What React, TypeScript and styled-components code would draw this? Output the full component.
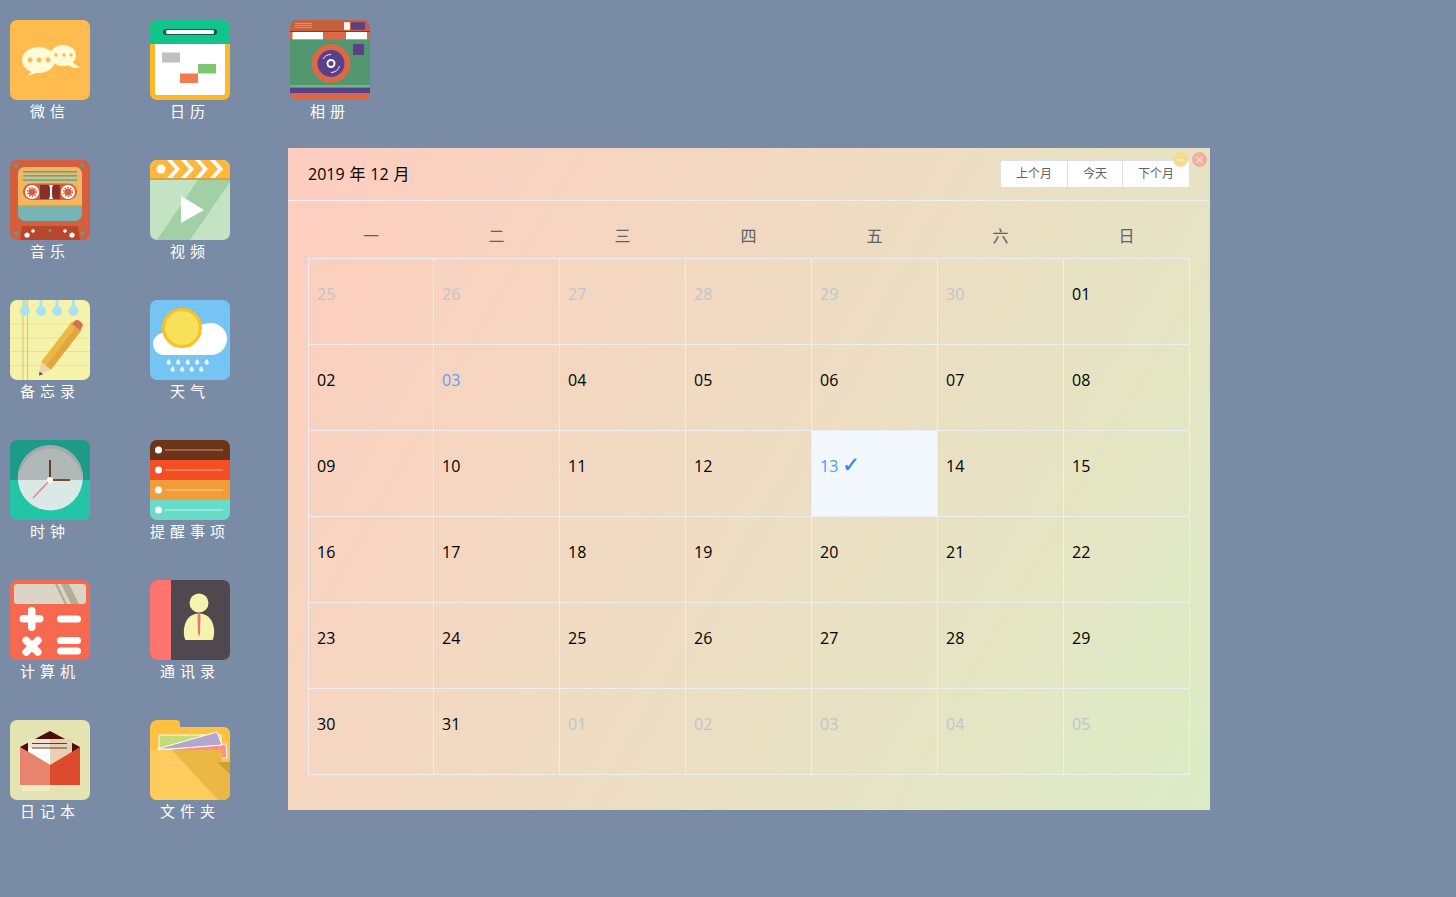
import React from "react";
import styled, { createGlobalStyle } from "styled-components";

const GlobalStyle = createGlobalStyle`
  html, body {
    margin: 0;
    padding: 0;
    height: 100%;
    overflow: hidden;
  }
  body {
    background: #7a8ba5;
    font-family: "Open Sans", "Noto Sans CJK SC", sans-serif;
  }
`;

const WeChatIcon = () => (
  <svg viewBox="0 0 80 80" width="80" height="80">
    <rect width="80" height="80" fill="#ffbb4d" />
    <path d="M17 56 L24 50 L36 50 Z" fill="#fffbd6" />
    <path d="M56 44 L64 48 L70 47.5 L62 42 Z" fill="#fffbd6" />
    <ellipse cx="53" cy="35.5" rx="13" ry="10.5" fill="#fffbd6" />
    <ellipse cx="28.5" cy="40" rx="16.5" ry="13" fill="#fffbd6" />
    <g fill="#ffbb4d">
      <circle cx="20" cy="40" r="2.4" />
      <circle cx="29" cy="40" r="2.4" />
      <circle cx="38" cy="40" r="2.4" />
      <circle cx="46" cy="35" r="1.7" />
      <circle cx="54" cy="35" r="1.7" />
      <circle cx="61" cy="35" r="1.7" />
    </g>
  </svg>
);

const CalendarIcon = () => (
  <svg viewBox="0 0 80 80" width="80" height="80">
    <rect width="80" height="80" fill="#fdb924" />
    <rect x="5" y="20" width="70" height="55" rx="2" fill="#fff" />
    <rect width="80" height="24" fill="#10c48c" />
    <rect x="13" y="9" width="54" height="6" rx="3" fill="#0f5a4a" />
    <rect x="16" y="10" width="48" height="4" rx="1.5" fill="#fff" />
    <rect x="12" y="32.5" width="18" height="10" fill="#c2bfc0" />
    <rect x="48" y="44" width="18" height="9.5" fill="#7dc771" />
    <rect x="30" y="53.5" width="18" height="9.5" fill="#f27b54" />
  </svg>
);

const CameraIcon = () => (
  <svg viewBox="0 0 80 80" width="80" height="80">
    <rect width="80" height="80" fill="#519770" />
    <rect width="80" height="11" fill="#c7603f" />
    <rect y="11" width="80" height="8.5" fill="#dd6845" />
    <rect y="11" width="80" height="1" fill="#5b3f89" />
    <rect x="2.5" y="12" width="30.5" height="7.3" fill="#fff" />
    <rect x="56" y="12" width="21" height="7.3" fill="#fff" />
    <g fill="#da8d70">
      <rect x="5" y="3" width="17" height="1" />
      <rect x="5" y="5" width="17" height="1" />
      <rect x="5" y="7" width="17" height="1" />
    </g>
    <rect x="54" y="2.3" width="6" height="7.5" fill="#fff" />
    <rect x="61" y="2.3" width="14" height="7.5" fill="#5b3f89" />
    <rect x="63" y="24" width="11" height="11" fill="#5b3f89" />
    <circle cx="41" cy="43.5" r="19.5" fill="#dd6845" />
    <circle cx="41" cy="43.5" r="13.5" fill="#5b3f89" />
    <path d="M33 39 A9 9 0 0 1 41 34.5 M49.5 46 A9 9 0 0 1 41 52.5" fill="none" stroke="#f2ecf8" strokeWidth="1" />
    <circle cx="41" cy="43.5" r="3.5" fill="#5b3f89" stroke="#fff" strokeWidth="2" />
    <rect y="65" width="80" height="2.7" fill="#70b48a" />
    <rect y="67.7" width="80" height="5.3" fill="#5b3f89" />
    <rect y="73" width="80" height="7" fill="#dd6845" />
  </svg>
);

const CassetteIcon = () => (
  <svg viewBox="0 0 80 80" width="80" height="80">
    <rect width="80" height="80" fill="#d35f3f" />
    <rect x="8" y="7" width="64" height="54" rx="7" fill="#79b4b5" />
    <path d="M8 47 V14 A7 7 0 0 1 15 7 H65 A7 7 0 0 1 72 14 V47 Z" fill="#f6b55f" />
    <g fill="#39b5b5">
      <rect x="13" y="11" width="54" height="1.6" />
      <rect x="13" y="15" width="54" height="1.6" />
      <rect x="13" y="19.3" width="54" height="1.6" />
      <rect x="8" y="45.5" width="64" height="1" />
    </g>
    <rect x="13" y="23.5" width="54" height="16.5" rx="8.25" fill="#d35f3f" />
    <circle cx="22" cy="32" r="7" fill="#fff" />
    <circle cx="58" cy="32" r="7" fill="#fff" />
    <circle cx="22" cy="32" r="3.6" fill="#d35f3f" />
    <circle cx="58" cy="32" r="3.6" fill="#d35f3f" />
    <circle cx="22" cy="32" r="4.4" fill="none" stroke="#d35f3f" strokeDasharray="1.4 1.4" strokeWidth="1.6" />
    <circle cx="58" cy="32" r="4.4" fill="none" stroke="#d35f3f" strokeDasharray="1.4 1.4" strokeWidth="1.6" />
    <rect x="30" y="25" width="20" height="14" fill="#85302a" />
    <path d="M39 25 H43 L42 28 V36 L43 39 H39 L40 36 V28 Z" fill="#fff" />
    <path d="M12 66 H68 L70 80 H10 Z" fill="#b9462a" />
    <g fill="#fff">
      <circle cx="17" cy="75" r="2.6" />
      <circle cx="23" cy="71" r="1.8" />
      <circle cx="55" cy="71" r="1.8" />
      <circle cx="62" cy="75" r="2.6" />
    </g>
    <g fill="#2fb3b3">
      <circle cx="40" cy="70.5" r="1.6" />
      <circle cx="6" cy="6" r="1.8" />
      <circle cx="72.5" cy="5.5" r="1.8" />
      <circle cx="6" cy="73" r="1.8" />
      <circle cx="72.5" cy="73.5" r="1.8" />
    </g>
  </svg>
);

const VideoIcon = () => (
  <svg viewBox="0 0 80 80" width="80" height="80">
    <rect width="80" height="80" fill="#c3e3c3" />
    <path d="M48 20 H80 V22 L40 80 H7 Z" fill="#a3cfa6" />
    <rect width="80" height="18" fill="#ffb73c" />
    <rect y="18" width="80" height="2" fill="#dca23d" />
    <circle cx="11" cy="9" r="4.5" fill="#fff" />
    <g fill="#fff">
      <path d="M17 0 H22 L30 9 L22 18 H17 L25 9 Z" />
      <path d="M31 0 H36 L44 9 L36 18 H31 L39 9 Z" />
      <path d="M45 0 H50 L58 9 L50 18 H45 L53 9 Z" />
      <path d="M60 0 H65 L73 9 L65 18 H60 L68 9 Z" />
    </g>
    <path d="M31 36 L54 50 L31 63 Z" fill="#fff" />
  </svg>
);

const NotesIcon = () => (
  <svg viewBox="0 0 80 80" width="80" height="80">
    <rect width="80" height="80" fill="#f5f2a9" />
    <g fill="#f1dd99">
      <rect y="23.5" width="80" height="1" />
      <rect y="37.5" width="80" height="1" />
      <rect y="51" width="80" height="1" />
      <rect y="65" width="80" height="1" />
    </g>
    <rect x="12.5" width="1" height="80" fill="#e2c07c" />
    <rect x="17" width="1" height="80" fill="#e2c07c" />
    <g fill="#a8e3ee">
      <rect x="13.5" width="3" height="11" />
      <rect x="29.5" width="3" height="11" />
      <rect x="45.5" width="3" height="11" />
      <rect x="62" width="3" height="11" />
      <circle cx="15" cy="11" r="5" />
      <circle cx="31" cy="11" r="5" />
      <circle cx="47" cy="11" r="5" />
      <circle cx="63.5" cy="11" r="5" />
    </g>
    <path d="M29 75.5 L31 62 L41 69.5 Z" fill="#f2d4a4" />
    <path d="M29 75.5 L29.6 71.5 L33 74.5 Z" fill="#555" />
    <path d="M31 62 L62 21.5 L72 29.5 L41 69.5 Z" fill="#e9b944" />
    <path d="M36 65.8 L67 25.5 L72 29.5 L41 69.5 Z" fill="#e2a542" />
    <path d="M62 24 L65 20.5 Q67 19.5 69 20.5 L72 23 Q73.5 25 72.5 26.5 L70 30 Z" fill="#cf7255" />
  </svg>
);

const WeatherIcon = () => (
  <svg viewBox="0 0 80 80" width="80" height="80">
    <rect width="80" height="80" fill="#76c4f4" />
    <path d="M14 55 A11 11 0 0 1 14 33 H40 C45 27 52 23 61 23 A16 16 0 0 1 61 55 Z" fill="#fff" />
    <circle cx="32" cy="28" r="18.5" fill="#f9e05a" stroke="#fcc11f" strokeWidth="3" />
    <g fill="#e4f3fb">
      <path d="M19 59 Q21.5 62 20.5 64 A2.3 2.3 0 0 1 16.5 62 Q17.5 60 19 59 Z" />
      <path d="M28.5 59 Q31 62 30 64 A2.3 2.3 0 0 1 26 62 Q27 60 28.5 59 Z" />
      <path d="M38 59 Q40.5 62 39.5 64 A2.3 2.3 0 0 1 35.5 62 Q36.5 60 38 59 Z" />
      <path d="M47.5 59 Q50 62 49 64 A2.3 2.3 0 0 1 45 62 Q46 60 47.5 59 Z" />
      <path d="M57 59 Q59.5 62 58.5 64 A2.3 2.3 0 0 1 54.5 62 Q55.5 60 57 59 Z" />
      <path d="M23 66 Q25.5 69 24.5 71 A2.3 2.3 0 0 1 20.5 69 Q21.5 67 23 66 Z" />
      <path d="M32.5 66 Q35 69 34 71 A2.3 2.3 0 0 1 30 69 Q31 67 32.5 66 Z" />
      <path d="M42 66 Q44.5 69 43.5 71 A2.3 2.3 0 0 1 39.5 69 Q40.5 67 42 66 Z" />
      <path d="M51.5 66 Q54 69 53 71 A2.3 2.3 0 0 1 49 69 Q50 67 51.5 66 Z" />
    </g>
  </svg>
);

const ClockIcon = () => (
  <svg viewBox="0 0 80 80" width="80" height="80">
    <rect width="80" height="40" fill="#1c9c87" />
    <rect y="40" width="80" height="40" fill="#22c6a7" />
    <circle cx="40.3" cy="38" r="32.5" fill="#dbe9e6" />
    <path d="M7.9 40 A32.5 32.5 0 1 1 72.7 40 Z" fill="#a5a8a8" />
    <path d="M7.9 40 C9 26 22 8.5 40.3 8.5 C58.6 8.5 71.6 26 72.7 40 Z" fill="#b0b9b8" />
    <rect x="39" y="20" width="2" height="20" fill="#6d3a1f" />
    <rect x="40" y="39" width="20" height="2" fill="#7a4a2c" />
    <path d="M40 40 L23 58" stroke="#f27e9a" strokeWidth="1.6" />
    <circle cx="40" cy="40" r="3" fill="#fff" />
  </svg>
);

const RemindersIcon = () => (
  <svg viewBox="0 0 80 80" width="80" height="80">
    <rect width="80" height="20" fill="#6d3419" />
    <rect y="20" width="80" height="20" fill="#f44f24" />
    <rect y="40" width="80" height="20" fill="#f29d39" />
    <rect y="60" width="80" height="20" fill="#68dcc9" />
    <g fill="#fff">
      <circle cx="8.5" cy="10" r="3.5" />
      <circle cx="8.5" cy="30" r="3.5" />
      <circle cx="8.5" cy="50" r="3.5" />
      <circle cx="8.5" cy="70" r="3.5" />
    </g>
    <rect x="15" y="9" width="58" height="2" fill="#99664d" />
    <rect x="15" y="29" width="58" height="2" fill="#fb7a57" />
    <rect x="15" y="49" width="58" height="2" fill="#f7b86a" />
    <rect x="15" y="69" width="58" height="2" fill="#91ebdb" />
  </svg>
);

const CalculatorIcon = () => (
  <svg viewBox="0 0 80 80" width="80" height="80">
    <rect width="80" height="80" fill="#f6694e" />
    <rect x="4" y="4" width="72" height="20" rx="3" fill="#dcd5c5" />
    <path d="M45 4 H47.5 L57 24 H54.5 Z M51 4 H59 L69 24 H61 Z" fill="#b2ad96" />
    <g fill="#fff">
      <rect x="9.5" y="35" width="24" height="7.5" rx="3.7" />
      <rect x="18" y="27" width="7.5" height="24" rx="3.7" />
      <rect x="47" y="35.5" width="24" height="7" rx="3.5" />
      <rect x="47" y="57" width="24" height="7" rx="3.5" />
      <rect x="47" y="67.5" width="24" height="7" rx="3.5" />
      <rect x="10" y="62.5" width="24" height="7.5" rx="3.7" transform="rotate(45 22 66.2)" />
      <rect x="10" y="62.5" width="24" height="7.5" rx="3.7" transform="rotate(-45 22 66.2)" />
    </g>
  </svg>
);

const ContactsIcon = () => (
  <svg viewBox="0 0 80 80" width="80" height="80">
    <rect width="80" height="80" fill="#50484f" />
    <rect width="21" height="80" fill="#ff7371" />
    <circle cx="49" cy="23" r="9.5" fill="#f5f3ad" />
    <path d="M35.5 60 C32 54 33 33.5 49 33.5 C65 33.5 66 54 62.5 60 Z" fill="#f5f3ad" />
    <path d="M48 33.5 H50 L50.5 36 L50 53 L49 57 L48 53 L47.5 36 Z" fill="#f27070" />
  </svg>
);

const DiaryIcon = () => (
  <svg viewBox="0 0 80 80" width="80" height="80">
    <rect width="80" height="80" fill="#e4e4b2" />
    <path d="M10 27 L40 11 L70 27 V32 H10 Z" fill="#4a0e08" />
    <rect x="18" y="19" width="44" height="26" fill="#e8d0b5" />
    <path d="M18 19 H40 V45 H18 Z" fill="#f0e3d0" />
    <path d="M18 28 H40 V45 L18 34 Z" fill="#fff" />
    <rect x="22" y="23" width="35" height="1" fill="#6a3a2e" />
    <rect x="22" y="27.5" width="35" height="1" fill="#6a3a2e" />
    <path d="M10 27 L40 45 L70 27 V65 H10 Z" fill="#de4a2d" />
    <path d="M10 27 L40 45 V65 H10 Z" fill="#e8836e" />
    <rect x="12" y="65" width="28" height="6" fill="#f0ecc0" />
  </svg>
);

const FolderIcon = () => (
  <svg viewBox="0 0 80 80" width="80" height="80">
    <path d="M0 7 A7 7 0 0 1 7 0 H26 A4 4 0 0 1 30 4 V7 H74 A6 6 0 0 1 80 13 V80 H0 Z" fill="#ffc13f" />
    <path d="M9 15 L71 15 L71 30 L9 30 Z" fill="#c4dd74" stroke="#fff" strokeWidth="1" />
    <path d="M20 29 L76 24 L77 38 L30 38 Z" fill="#ff8f8a" stroke="#fff" strokeWidth="1" />
    <path d="M7 29 L67 12 L72 25 L20 29 Z" fill="#b4a6cb" stroke="#fff" strokeWidth="1" />
    <path d="M0 30 H62 L72 34 V42 H80 V80 H0 Z" fill="#fecb5d" />
    <path d="M22 30 H71 L72 42 H80 V80 H68 Z" fill="#ecb845" />
    <path d="M67 42 H80 V54 Z" fill="#d19f2d" />
    <rect x="11" y="42" width="22" height="0.6" fill="#ffd9a0" />
  </svg>
);

interface IApp {
  name: string;
  icon: React.ReactNode;
}

const apps: IApp[] = [
  { name: "微信", icon: <WeChatIcon /> },
  { name: "音乐", icon: <CassetteIcon /> },
  { name: "备忘录", icon: <NotesIcon /> },
  { name: "时钟", icon: <ClockIcon /> },
  { name: "计算机", icon: <CalculatorIcon /> },
  { name: "日记本", icon: <DiaryIcon /> },
  { name: "日历", icon: <CalendarIcon /> },
  { name: "视频", icon: <VideoIcon /> },
  { name: "天气", icon: <WeatherIcon /> },
  { name: "提醒事项", icon: <RemindersIcon /> },
  { name: "通讯录", icon: <ContactsIcon /> },
  { name: "文件夹", icon: <FolderIcon /> },
  { name: "相册", icon: <CameraIcon /> },
];

const weekDays = ["一", "二", "三", "四", "五", "六", "日"];

type DayKind = "muted" | "normal" | "hover" | "today";

interface IDay {
  label: string;
  kind: DayKind;
}

const pad = (n: number) => (n < 10 ? `0${n}` : `${n}`);

const buildDays = (): IDay[] => {
  const days: IDay[] = [];
  for (let d = 25; d <= 30; d++) days.push({ label: pad(d), kind: "muted" });
  for (let d = 1; d <= 31; d++) {
    const kind: DayKind = d === 3 ? "hover" : d === 13 ? "today" : "normal";
    days.push({ label: pad(d), kind });
  }
  for (let d = 1; d <= 5; d++) days.push({ label: pad(d), kind: "muted" });
  return days;
};

const weeks: IDay[][] = [];
const allDays = buildDays();
for (let i = 0; i < allDays.length; i += 7) weeks.push(allDays.slice(i, i + 7));

const dayColor: Record<DayKind, string> = {
  muted: "#c0c4cc",
  normal: "#000",
  hover: "#5f9cf0",
  today: "#409eff",
};

const App = () => {
  return (
    <>
      <GlobalStyle />
      <Desktop>
        <AppGrid>
          {apps.map((app) => (
            <AppItem key={app.name}>
              <AppIcon>{app.icon}</AppIcon>
              <AppName>{app.name}</AppName>
            </AppItem>
          ))}
        </AppGrid>
        <CalendarWindow>
          <WindowDot $color="#f5da90" $right={22}>
            <MinusMark />
          </WindowDot>
          <WindowDot $color="#efb0a2" $right={3}>
            <CloseMark>×</CloseMark>
          </WindowDot>
          <CalendarHeader>
            <CalendarTitle>2019 年 12 月</CalendarTitle>
            <ButtonGroup>
              <GroupButton>上个月</GroupButton>
              <GroupButton>今天</GroupButton>
              <GroupButton>下个月</GroupButton>
            </ButtonGroup>
          </CalendarHeader>
          <CalendarBody>
            <CalendarTable>
              <thead>
                <tr>
                  {weekDays.map((w) => (
                    <WeekHead key={w}>{w}</WeekHead>
                  ))}
                </tr>
              </thead>
              <tbody>
                {weeks.map((week, i) => (
                  <tr key={i}>
                    {week.map((day, j) => (
                      <DayCell key={j} $kind={day.kind}>
                        <DayLabel>
                          {day.label}
                          {day.kind === "today" && <CheckMark>✓</CheckMark>}
                        </DayLabel>
                      </DayCell>
                    ))}
                  </tr>
                ))}
              </tbody>
            </CalendarTable>
          </CalendarBody>
        </CalendarWindow>
      </Desktop>
    </>
  );
};

export default App;

const Desktop = styled.div`
  position: relative;
  width: 1456px;
  height: 897px;
  overflow: hidden;
`;

const AppGrid = styled.div`
  display: grid;
  grid-auto-flow: column;
  grid-template-rows: repeat(6, 140px);
  grid-auto-columns: 140px;
  padding: 20px 0 0 10px;
`;

const AppItem = styled.div`
  display: flex;
  flex-direction: column;
  width: 80px;
`;

const AppIcon = styled.div`
  width: 80px;
  height: 80px;
  border-radius: 7px;
  overflow: hidden;

  svg {
    display: block;
  }
`;

const AppName = styled.div`
  color: #fff;
  font-size: 15px;
  line-height: 22px;
  letter-spacing: 5px;
  text-align: center;
  white-space: nowrap;
`;

const CalendarWindow = styled.div`
  position: absolute;
  left: 288px;
  top: 148px;
  width: 922px;
  height: 662px;
  background: linear-gradient(120deg, #ffcdbf, #dcecc5);
`;

const WindowDot = styled.span<{ $color: string; $right: number }>`
  position: absolute;
  top: 4px;
  right: ${(p) => p.$right}px;
  z-index: 2;
  width: 15px;
  height: 15px;
  border-radius: 50%;
  background: ${(p) => p.$color};
  display: flex;
  align-items: center;
  justify-content: center;
`;

const MinusMark = styled.span`
  width: 8px;
  height: 2px;
  background: #fdeab8;
`;

const CloseMark = styled.span`
  color: #fde3dc;
  font-size: 15px;
  line-height: 15px;
`;

const CalendarHeader = styled.div`
  display: flex;
  justify-content: space-between;
  align-items: center;
  padding: 12px 20px;
  border-bottom: 1px solid #ebeef5;
`;

const CalendarTitle = styled.div`
  color: #000;
  font-size: 16px;
  word-spacing: 0.7px;
  padding-bottom: 2px;
`;

const ButtonGroup = styled.div`
  display: flex;
`;

const GroupButton = styled.button`
  height: 28px;
  padding: 0 15px 2px;
  margin-left: -1px;
  background: #fff;
  border: 1px solid #dcdfe6;
  color: #606266;
  font-family: inherit;
  font-size: 12px;
  white-space: nowrap;

  &:first-child {
    border-radius: 3px 0 0 3px;
  }
  &:last-child {
    border-radius: 0 3px 3px 0;
  }
`;

const CalendarBody = styled.div`
  padding: 12px 20px 35px;
`;

const CalendarTable = styled.table`
  width: 100%;
  table-layout: fixed;
  border-collapse: collapse;
  border-spacing: 0;
`;

const WeekHead = styled.th`
  padding: 13px 0 11px;
  color: #606266;
  font-size: 16px;
  font-weight: 400;
  line-height: 21px;

  &:first-child {
    width: 125px;
  }
`;

const DayCell = styled.td<{ $kind: DayKind }>`
  height: 85px;
  padding: 0;
  border: 1px solid #ebeef5;
  vertical-align: top;
  color: ${(p) => dayColor[p.$kind]};
  background: ${(p) => (p.$kind === "today" ? "#f2f8fe" : "transparent")};
`;

const DayLabel = styled.div`
  padding: 25px 8px 0;
  font-size: 16px;
  line-height: 21px;
`;

const CheckMark = styled.span`
  margin-left: 4px;
  font-family: "DejaVu Sans", sans-serif;
  font-size: 21px;
  line-height: 0;
  color: #2f86f0;
  -webkit-text-stroke: 0.4px #2f86f0;
`;
